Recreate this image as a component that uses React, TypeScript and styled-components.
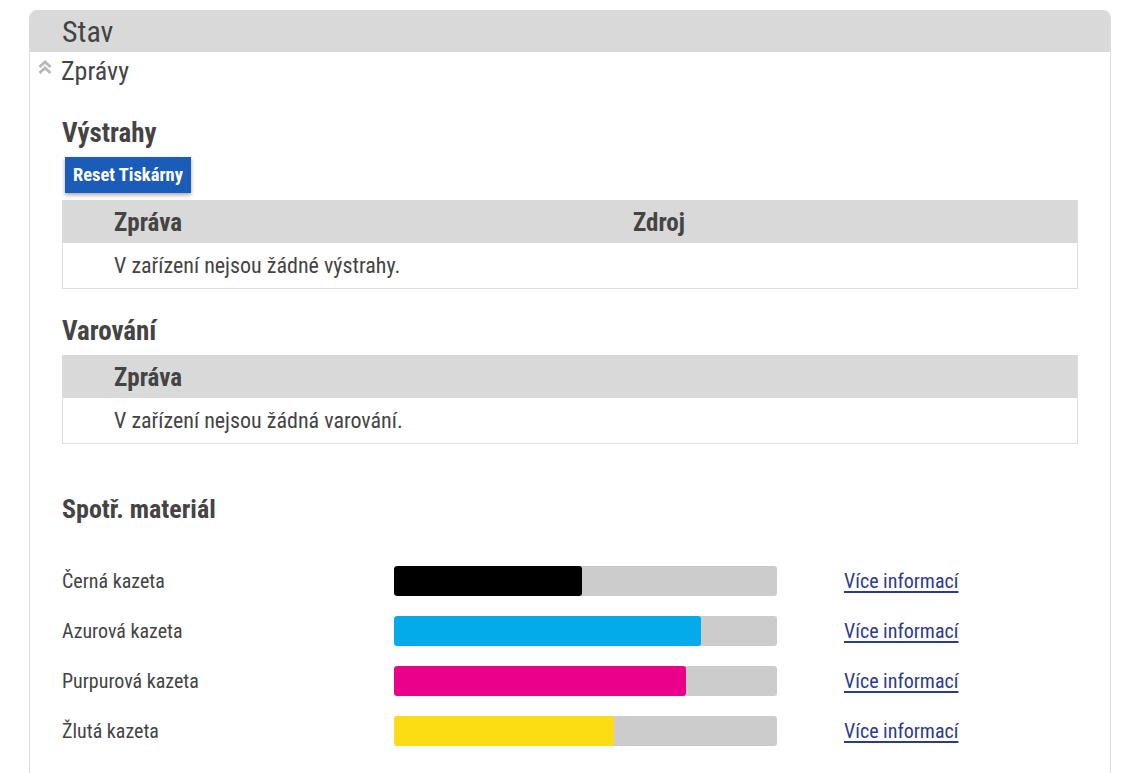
import React from 'react'
import styled, { createGlobalStyle } from 'styled-components'

const GlobalStyle = createGlobalStyle`
  html, body {
    margin: 0;
    padding: 0;
    background: #fff;
  }
  body {
    font-family: "Roboto Condensed", Roboto, "Liberation Sans", sans-serif;
    color: #444;
  }
`

const Page = styled.div`
  padding: 10px 18px 0 29px;
`
const Panel = styled.section`
  border: 1px solid #ddd;
  border-top: none;
  border-radius: 8px 8px 0 0;
  overflow: hidden;
  padding-bottom: 40px;
`
const PanelHeader = styled.h1`
  margin: 0;
  height: 42px;
  background: #d9d9d9;
  padding-left: 32px;
  font-size: 30px;
  font-weight: 400;
  line-height: 44px;
  color: #444;
`
const SubToggle = styled.div`
  display: flex;
  align-items: center;
  gap: 9px;
  padding-left: 8px;
  height: 38px;
  font-size: 26px;
  color: #444;
  svg {
    color: #b8b8b8;
    margin-top: -7px;
  }
`
const Body = styled.div`
  padding: 0 32px;
`
const SectionTitle = styled.h2<{ $top: number }>`
  margin: ${p => p.$top}px 0 0;
  font-size: 27px;
  font-weight: 700;
  line-height: 34px;
  color: #444;
`
const ResetButton = styled.button`
  margin: 7px 0 7px 3px;
  height: 36px;
  padding: 0 8px;
  border: none;
  background: #1b5cb8;
  color: #fff;
  font-family: inherit;
  font-weight: 700;
  font-size: 18.5px;
  box-shadow: 0 2px 4px rgba(0, 0, 0, .35);
  cursor: pointer;
`
const Table = styled.div<{ $cols: string; $top: number }>`
  display: grid;
  grid-template-columns: ${p => p.$cols};
  border: 1px solid #ddd;
  border-top: none;
  margin-top: ${p => p.$top}px;
`
const HeadCell = styled.div`
  background: #d9d9d9;
  height: 43px;
  line-height: 45px;
  padding-left: 51px;
  font-size: 25px;
  font-weight: 700;
  color: #444;
`
const Cell = styled.div`
  height: 45px;
  line-height: 46px;
  padding-left: 51px;
  font-size: 22px;
  color: #444;
`
const SuppliesTitle = styled.h2`
  margin: 48px 0 30px;
  font-size: 26px;
  font-weight: 700;
  line-height: 34px;
  color: #444;
`
const SupplyRow = styled.div`
  display: grid;
  grid-template-columns: 332px 383px 67px auto;
  align-items: center;
  height: 50px;
  font-size: 20px;
`
const Bar = styled.div`
  height: 30px;
  background: #cccccc;
  border-radius: 3px;
  overflow: hidden;
`
const Fill = styled.div<{ $color: string }>`
  height: 100%;
  background: ${p => p.$color};
  border-radius: 3px;
`
const MoreLink = styled.a`
  grid-column: 4;
  color: #2e3b8c;
  text-decoration: underline;
  text-underline-offset: 3px;
  font-size: 20px;
`

const ChevronsUp = () => (
  <svg width="14" height="15" viewBox="0 0 14 15" fill="none" stroke="currentColor" strokeWidth="2.8">
    <path d="M1.5 7 L7 2 L12.5 7" />
    <path d="M1.5 13 L7 8 L12.5 13" />
  </svg>
)

const supplies = [
  { name: 'Černá kazeta', color: '#000000', level: 49 },
  { name: 'Azurová kazeta', color: '#04abeb', level: 80.2 },
  { name: 'Purpurová kazeta', color: '#eb008b', level: 76.2 },
  { name: 'Žlutá kazeta', color: '#fcdd14', level: 57.4 },
]

const App = () => (
  <Page>
    <GlobalStyle />
    <Panel>
      <PanelHeader>Stav</PanelHeader>
      <SubToggle>
        <ChevronsUp />
        Zprávy
      </SubToggle>
      <Body>
        <SectionTitle $top={26}>Výstrahy</SectionTitle>
        <ResetButton>Reset Tiskárny</ResetButton>
        <Table $cols="519px 1fr" $top={0}>
          <HeadCell>Zpráva</HeadCell>
          <HeadCell>Zdroj</HeadCell>
          <Cell>V zařízení nejsou žádné výstrahy.</Cell>
          <Cell />
        </Table>
        <SectionTitle $top={25}>Varování</SectionTitle>
        <Table $cols="1fr" $top={7}>
          <HeadCell>Zpráva</HeadCell>
          <Cell>V zařízení nejsou žádná varování.</Cell>
        </Table>
        <SuppliesTitle>Spotř. materiál</SuppliesTitle>
        {supplies.map(s => (
          <SupplyRow key={s.name}>
            <span>{s.name}</span>
            <Bar>
              <Fill $color={s.color} style={{ width: `${s.level}%` }} />
            </Bar>
            <MoreLink href="#">Více informací</MoreLink>
          </SupplyRow>
        ))}
      </Body>
    </Panel>
  </Page>
)

export default App
